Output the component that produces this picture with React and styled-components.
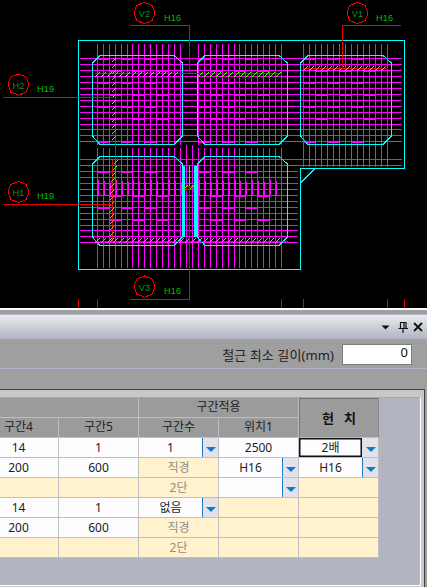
import React from 'react';
import styled, { createGlobalStyle } from 'styled-components';

const Global = createGlobalStyle`
  html, body { margin: 0; padding: 0; background: #9d9d9d; overflow: hidden; }
  #root { width: 427px; height: 587px; overflow: hidden; }
`;

const Page = styled.div`
  width: 427px;
  height: 587px;
  display: flex;
  flex-direction: column;
  font-family: "Noto Sans", "Noto Sans CJK KR", sans-serif;
  font-size: 12px;
  color: #1c1c1c;
`;

const CadView = styled.svg`
  display: block;
  flex: none;
  width: 427px;
  height: 308px;
  background: #000;
`;

const Dock = styled.section`
  flex: 1;
  min-height: 0;
  display: flex;
  flex-direction: column;
  border-top: 2px solid #fff;
  padding-top: 4px;
  background: #9f9f9f;
`;

const TitleBar = styled.header`
  flex: none;
  height: 25px;
  display: flex;
  align-items: center;
  justify-content: flex-end;
  gap: 3px;
  padding-right: 3px;
  background: linear-gradient(#e9eaed, #b1b5c3);
  border-top: 1px solid #b4b8c8;
  box-sizing: border-box;
`;

const DropGlyph = styled.svg`
  margin-right: 4px;
`;

const Options = styled.div`
  flex: none;
  height: 29px;
  box-sizing: border-box;
  display: flex;
  align-items: center;
  justify-content: flex-end;
  gap: 8px;
  padding: 1px 15px 0 0;
`;

const OptionLabel = styled.label`
  font-size: 13px;
  letter-spacing: 0.1px;
  color: #222;
`;

const NumberBox = styled.div`
  width: 70px;
  height: 21px;
  box-sizing: border-box;
  background: #fff;
  border: 1px solid #7d7d7d;
  text-align: right;
  line-height: 15px;
  font-size: 13px;
  padding-right: 3px;
  color: #111;
`;

const Separator = styled.div`
  flex: none;
  height: 20px;
  border-top: 1px solid #b0b5c8;
`;

const Frame = styled.div`
  flex: 1;
  min-height: 0;
  margin-right: 2px;
  box-sizing: border-box;
  border-top: 1px solid #404040;
  border-right: 1px solid #404040;
  background: #c8c8c8;
  padding: 7px 3px 0 0;
  display: flex;
  flex-direction: column;
`;

const GridArea = styled.div`
  height: 187px;
  flex: none;
  overflow: hidden;
  background: #b2b5bf;
  border-top: 1px solid #9ea4c2;
  border-right: 1px solid #fff;
  border-bottom: 1px solid #fff;
`;

const Sheet = styled.div`
  display: grid;
  grid-template-columns: repeat(5, 80px);
  grid-auto-rows: 20px;
  width: 400px;
  margin-left: -21px;
`;

const Cell = styled.div`
  box-sizing: border-box;
  display: flex;
  align-items: stretch;
  border-right: 1px solid #bfbfbf;
  border-bottom: 1px solid #bfbfbf;
  min-width: 0;
  background: ${p => (p.$tone === 'cream' ? '#fff2cc' : '#fdfcff')};
  color: ${p => (p.$tone === 'cream' ? '#8e8e8e' : '#1c1c1c')};
`;

const CellText = styled.span`
  flex: 1;
  min-width: 0;
  text-align: center;
  line-height: 19px;
  ${p => p.$focus && `
    box-shadow: inset 0 0 0 1.5px #111;
  `}
`;

const HeadCell = styled.div`
  box-sizing: border-box;
  background: #9b9b9b;
  border-right: 1px solid #bfbfbf;
  border-bottom: 1px solid #bfbfbf;
  text-align: center;
  line-height: 18px;
  color: #222;
  grid-column: span ${p => p.$span || 1};
`;

const HunchHead = styled.div`
  box-sizing: border-box;
  grid-row: span 2;
  background: #9b9b9b;
  border: 1px solid #747474;
  border-right: 1px solid #8a8a8a;
  border-bottom: 1px solid #bfbfbf;
  display: flex;
  align-items: center;
  justify-content: center;
  padding-bottom: 2px;
  font-weight: 700;
  font-size: 13px;
  color: #111;
  white-space: pre;
`;

const ComboButton = styled.span`
  flex: none;
  width: 16px;
  box-sizing: border-box;
  background: #e2e3ea;
  border-left: 1px solid ${p => (p.$plain ? '#e2e3ea' : '#1878c0')};
  display: flex;
  align-items: center;
  justify-content: center;
  &::after {
    content: "";
    margin-top: 3px;
    border-left: 5px solid transparent;
    border-right: 5px solid transparent;
    border-top: 5px solid #0f7acb;
  }
`;

const rows = [
  [['14'], ['1'], ['1', 'combo'], ['2500'], ['2배', 'focus']],
  [['200'], ['600'], ['직경', 'cream'], ['H16', 'combo'], ['H16', 'combo']],
  [['', 'cream'], ['', 'cream'], ['2단', 'cream'], ['', 'combo'], ['', 'cream']],
  [['14'], ['1'], ['없음', 'combo'], ['', 'cream'], ['', 'cream']],
  [['200'], ['600'], ['직경', 'cream'], ['', 'cream'], ['', 'cream']],
  [['', 'cream'], ['', 'cream'], ['2단', 'cream'], ['', 'cream'], ['', 'cream']],
];

/* ---------- CAD drawing data ---------- */
const hl = (y, a, b) => `M${a} ${y + 0.5}H${b}`;
const vl = (x, a, b) => `M${x + 0.5} ${a}V${b}`;

const upperY = [58, 64, 70, 76, 82, 88, 94, 100, 106, 112, 118, 124, 129, 135, 141];
const lowerY = [159, 165, 171, 177, 183, 189, 195, 201, 207, 213, 219, 225, 230, 236, 242];
const xsA = [97, 103, 109, 115, 121, 127, 132, 138, 144, 150, 156, 162, 168, 174, 180];
const xsB = [198, 204, 210, 216, 222, 228, 234, 239, 245, 251, 257, 263, 269, 275, 281];
const xsC = [303, 309, 315, 321, 327, 333, 339, 345, 351, 357, 363, 369, 375, 381, 387];

const magenta = [
  ...upperY.map(y => hl(y, 80, 402)),
  ...lowerY.map((y, i) => hl(y, 80, i < 2 ? 402 : 298)),
  ...[...xsA, ...xsB].map(x => vl(x, 44, 145)),
  ...[...xsA, ...xsB].map(x => vl(x, 148, 268)),
  ...xsC.map(x => vl(x, 44, 167)),
  vl(186, 145, 268),
  vl(192, 145, 268),
].join('');

const thickRows = (ys, starts) =>
  ys.flatMap((y, i) =>
    starts.map(x => hl(y, x + (i % 2 ? 12 : 0), x + (i % 2 ? 24 : 12)))
  ).join('');

const thick = [
  thickRows([58, 70, 82, 94, 106, 118, 141], [97, 121, 145, 198, 222, 246, 303, 327, 351]),
  thickRows([171, 195, 207, 219], [97, 121, 145, 198, 222, 246]),
].join('');

const stubXs = [98, 104, 110, 116, 122, 128, 133, 139, 145, 151, 157, 163, 169, 175, 181, 199, 205, 211, 217, 223, 229, 235, 240, 246, 252, 258, 264, 270, 276, 281];
const stubs = stubXs.map((x, i) => vl(x, 180 + (i % 3), 195)).join('');

const panel = (a, t, b, u, c = 8) =>
  `M${a + c} ${t + 0.5}H${b - c}L${b + 0.5} ${t + c}V${u - c}L${b - c} ${u + 0.5}H${a + c}L${a + 0.5} ${u - c}V${t + c}Z`;

const hatchH = (y, a, b) => {
  let d = '';
  for (let x = a; x <= b; x += 6) d += `M${x} ${y + 3}L${x + 5} ${y - 2}`;
  return d;
};
const hatchV = (x, a, b, lean = 0) => {
  let d = '';
  for (let y = a; y <= b; y += 6) {
    const k = y < a + 24 ? Math.round(lean * (1 - (y - a) / 24)) : 0;
    d += `M${x + k} ${y + 2}L${x + k + 4} ${y - 2}`;
  }
  return d;
};

const green = [
  hatchH(74, 95, 178),
  hatchH(74, 198, 280),
  hatchH(68, 303, 386),
  hatchH(240, 95, 285),
  hatchV(112, 60, 143),
  hatchV(110, 162, 240, 4),
  hatchH(187, 183, 192),
].join('');

const bubble = (cx, cy) => {
  const off = [10.4, 9.8, 10.8, 10, 10.6, 9.9, 10.9, 9.8, 10.4, 10.1, 10.7, 9.9, 10.5, 10, 10.8, 9.9];
  return off
    .map((r, i) => {
      const a = (i / off.length) * Math.PI * 2;
      return `${(cx + r * Math.cos(a)).toFixed(1)},${(cy + r * Math.sin(a)).toFixed(1)}`;
    })
    .join(' ');
};

const marks = [
  { id: 'V2', cx: 144.5, cy: 13, lx: 164, ly: 21, sz: 'H16' },
  { id: 'V1', cx: 357.5, cy: 13, lx: 376, ly: 21, sz: 'H16' },
  { id: 'H2', cx: 18.5, cy: 84.5, lx: 37, ly: 92, sz: 'H19' },
  { id: 'H1', cx: 18.5, cy: 192, lx: 37, ly: 199, sz: 'H19' },
  { id: 'V3', cx: 144.5, cy: 286.5, lx: 164, ly: 294, sz: 'H16' },
];

const redBright = [
  hl(25, 130, 190), vl(189, 25, 73),
  hl(25, 342, 401), vl(342, 25, 68),
  hl(97, 3, 114),
  hl(204, 3, 112),
  hl(299, 130, 190), vl(189, 187, 299),
  ...[78, 97, 281, 303, 387, 404].map(x => vl(x, 299, 308)),
].join('');

const redDim = [
  hl(73, 95, 282),
  hl(68, 303, 388),
  vl(115, 60, 160),
  vl(112, 160, 242),
  hl(241, 95, 288),
  hl(186, 186, 193),
  vl(186, 186, 192),
  vl(193, 186, 192),
].join('');

const MarkText = styled.text`
  font-family: "Liberation Sans", sans-serif;
  font-size: ${p => p.$size}px;
  fill: ${p => p.$fill};
  letter-spacing: ${p => p.$track}px;
`;

const Cad = () => (
  <CadView viewBox="0 0 427 308" shapeRendering="crispEdges">
    <path d={magenta} stroke="#ff00ff" fill="none" />
    <path d={thick} stroke="#ff00ff" strokeWidth="2" fill="none" />
    <path d={stubs} stroke="#ff00ff" strokeWidth="1.6" fill="none" />
    <path d={vl(183, 166, 237)} stroke="#00ffff" strokeWidth="3" />
    <path d={vl(195, 166, 237)} stroke="#00ffff" strokeWidth="3" />
    <path d={vl(189, 166, 237)} stroke="#00e8e8" />
    <path
      d={[
        panel(92, 55, 182, 144), panel(197, 55, 287, 144), panel(300, 55, 391, 144),
        panel(92, 156, 182, 245), panel(197, 156, 287, 245),
      ].join('')}
      stroke="#00ffff"
      fill="none"
    />
    <path
      d="M78.5 40.5H404.5V168.5H300.5V269.5H78.5ZM300.5 183L315 168.5"
      stroke="#00ffff"
      fill="none"
    />
    <path d={redDim} stroke="#c02000" fill="none" />
    <path d={green} stroke="#50ff00" fill="none" />
    <path d={redBright} stroke="#f00000" fill="none" />
    {marks.map(m => (
      <g key={m.id}>
        <polygon points={bubble(m.cx, m.cy)} stroke="#f00000" fill="none" />
        <MarkText x={m.cx} y={m.cy + 4} textAnchor="middle" $size={9} $track={0.3} $fill="#0a9a0a">{m.id}</MarkText>
        <MarkText x={m.lx} y={m.ly} $size={9} $track={0.3} $fill="#00c000">{m.sz}</MarkText>
      </g>
    ))}
  </CadView>
);

const Arrow = () => (
  <DropGlyph width="9" height="14" viewBox="0 0 9 14"><path d="M0.5 5.5H8.5L4.5 9.5Z" fill="#111" /></DropGlyph>
);
const Pin = () => (
  <svg width="12" height="14" viewBox="0 0 12 14">
    <path d="M3.5 2.5H9V8.5H3.5ZM7 3V8M1.5 8.5H11M6 9V13" stroke="#111" strokeWidth="1.2" fill="none" />
  </svg>
);
const Close = () => (
  <svg width="12" height="14" viewBox="0 0 12 14">
    <path d="M2 3L10 11M10 3L2 11" stroke="#111" strokeWidth="1.8" fill="none" />
  </svg>
);

export default function App() {
  return (
    <Page>
      <Global />
      <Cad />
      <Dock>
        <TitleBar>
          <Arrow />
          <Pin />
          <Close />
        </TitleBar>
        <Options>
          <OptionLabel>철근 최소 길이(mm)</OptionLabel>
          <NumberBox>0</NumberBox>
        </Options>
        <Separator />
        <Frame>
          <GridArea>
            <Sheet>
              <HeadCell $span={2} />
              <HeadCell $span={2}>구간적용</HeadCell>
              <HunchHead>{'헌   치'}</HunchHead>
              <HeadCell>구간4</HeadCell>
              <HeadCell>구간5</HeadCell>
              <HeadCell>구간수</HeadCell>
              <HeadCell>위치1</HeadCell>
              {rows.flatMap((row, r) =>
                row.map(([text, kind], c) => (
                  <Cell key={`${r}-${c}`} $tone={kind === 'cream' ? 'cream' : 'white'}>
                    <CellText $focus={kind === 'focus'}>{text}</CellText>
                    {(kind === 'combo' || kind === 'focus') && <ComboButton $plain={kind === 'focus'} />}
                  </Cell>
                ))
              )}
            </Sheet>
          </GridArea>
        </Frame>
      </Dock>
    </Page>
  );
}
